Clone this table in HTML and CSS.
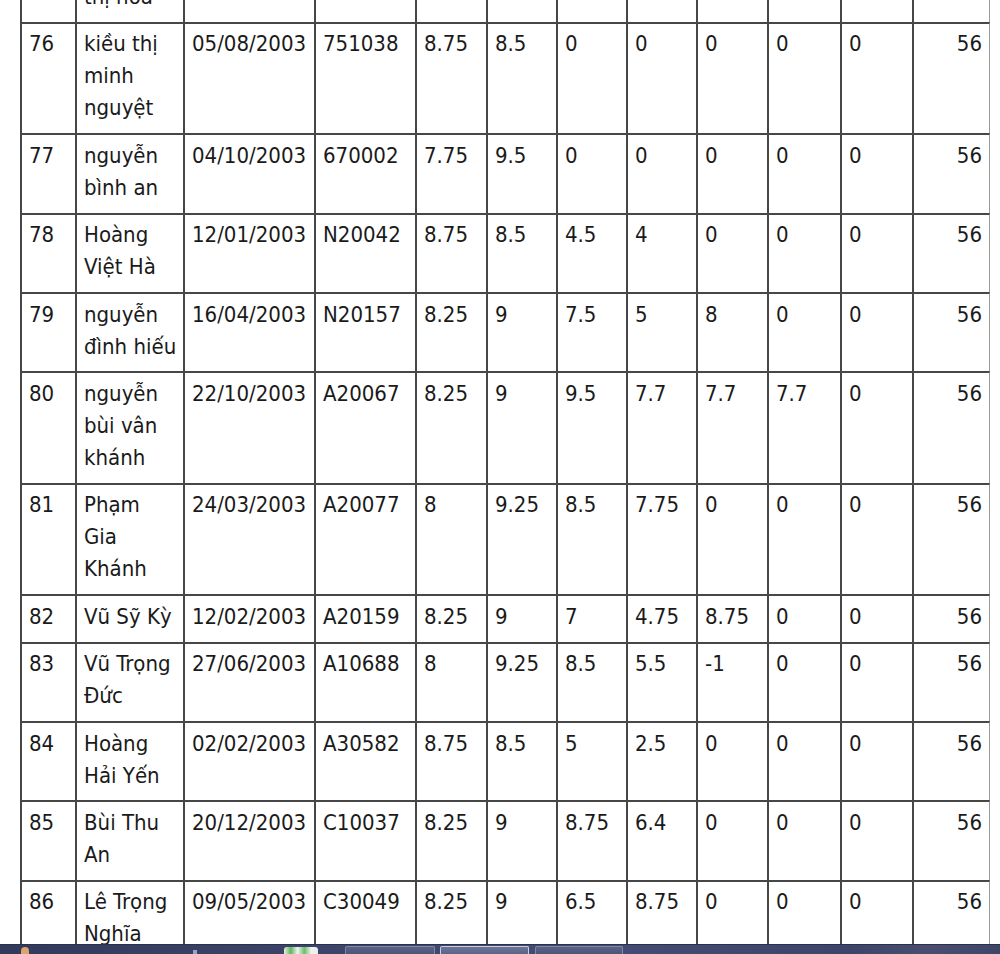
FILE: index.html
```html
<!DOCTYPE html>
<html lang="vi">
<head>
<meta charset="utf-8">
<title>Danh sách</title>
<link rel="stylesheet" href="styles.css">
</head>
<body>
<div class="page">
<table class="scores">
<tbody>
<tr><td class="c1">75</td><td class="c2 name">nguyễn thị hoa</td><td class="c3"></td><td class="c4"></td><td class="c5"></td><td class="c6"></td><td class="c7"></td><td class="c8"></td><td class="c9"></td><td class="c10"></td><td class="c11"></td><td class="c12 num"></td></tr>
<tr><td>76</td><td class="name">kiều thị minh nguyệt</td><td>05/08/2003</td><td>751038</td><td>8.75</td><td>8.5</td><td>0</td><td>0</td><td>0</td><td>0</td><td>0</td><td class="num">56</td></tr>
<tr><td>77</td><td class="name">nguyễn bình an</td><td>04/10/2003</td><td>670002</td><td>7.75</td><td>9.5</td><td>0</td><td>0</td><td>0</td><td>0</td><td>0</td><td class="num">56</td></tr>
<tr><td>78</td><td class="name">Hoàng Việt Hà</td><td>12/01/2003</td><td>N20042</td><td>8.75</td><td>8.5</td><td>4.5</td><td>4</td><td>0</td><td>0</td><td>0</td><td class="num">56</td></tr>
<tr><td>79</td><td class="name">nguyễn đình hiếu</td><td>16/04/2003</td><td>N20157</td><td>8.25</td><td>9</td><td>7.5</td><td>5</td><td>8</td><td>0</td><td>0</td><td class="num">56</td></tr>
<tr><td>80</td><td class="name">nguyễn bùi vân khánh</td><td>22/10/2003</td><td>A20067</td><td>8.25</td><td>9</td><td>9.5</td><td>7.7</td><td>7.7</td><td>7.7</td><td>0</td><td class="num">56</td></tr>
<tr><td>81</td><td class="name">Phạm Gia Khánh</td><td>24/03/2003</td><td>A20077</td><td>8</td><td>9.25</td><td>8.5</td><td>7.75</td><td>0</td><td>0</td><td>0</td><td class="num">56</td></tr>
<tr><td>82</td><td class="name">Vũ Sỹ Kỳ</td><td>12/02/2003</td><td>A20159</td><td>8.25</td><td>9</td><td>7</td><td>4.75</td><td>8.75</td><td>0</td><td>0</td><td class="num">56</td></tr>
<tr><td>83</td><td class="name">Vũ Trọng Đức</td><td>27/06/2003</td><td>A10688</td><td>8</td><td>9.25</td><td>8.5</td><td>5.5</td><td>-1</td><td>0</td><td>0</td><td class="num">56</td></tr>
<tr><td>84</td><td class="name">Hoàng Hải Yến</td><td>02/02/2003</td><td>A30582</td><td>8.75</td><td>8.5</td><td>5</td><td>2.5</td><td>0</td><td>0</td><td>0</td><td class="num">56</td></tr>
<tr><td>85</td><td class="name">Bùi Thu An</td><td>20/12/2003</td><td>C10037</td><td>8.25</td><td>9</td><td>8.75</td><td>6.4</td><td>0</td><td>0</td><td>0</td><td class="num">56</td></tr>
<tr><td>86</td><td class="name">Lê Trọng Nghĩa</td><td>09/05/2003</td><td>C30049</td><td>8.25</td><td>9</td><td>6.5</td><td>8.75</td><td>0</td><td>0</td><td>0</td><td class="num">56</td></tr>
</tbody>
</table>
</div>
<div class="taskbar">
  <span class="tb-icon tb-start"></span>
  <span class="tb-icon tb-small"></span>
  <span class="tb-icon tb-green"></span>
  <span class="tb-btn tb-b1"></span>
  <span class="tb-btn tb-b2 active"></span>
  <span class="tb-btn tb-b3"></span>
</div>
</body>
</html>
```
FILE: styles.css
```css
html, body {
  margin: 0;
  padding: 0;
  background: #ffffff;
  overflow: hidden;
}

body {
  font-family: "DejaVu Sans Condensed", "DejaVu Sans", sans-serif;
  font-stretch: condensed;
  font-size: 22px;
  color: #1a1a1a;
}

.page {
  padding-left: 20px;
  margin-top: -57.5px;
}

.scores {
  border-collapse: separate;
  border-spacing: 0;
  table-layout: fixed;
  width: 970px;
}

.scores td {
  box-sizing: border-box;
  border-left: 2px solid #474747;
  border-top: 2px solid #474747;
  padding: 4.5px 4px 8.9px 7px;
  line-height: 32px;
  vertical-align: top;
  text-align: left;
  white-space: normal;
}

.scores td.name {
  padding-right: 5.5px;
}

.scores td:last-child {
  border-right: 1px solid #9a9a9a;
  padding-right: 7px;
}

.scores td.num {
  text-align: right;
}

.c1 { width: 55px; }
.c2 { width: 108px; }
.c3 { width: 131px; }
.c4 { width: 101px; }
.c5 { width: 71px; }
.c6 { width: 70px; }
.c7 { width: 70px; }
.c8 { width: 70px; }
.c9 { width: 71px; }
.c10 { width: 73px; }
.c11 { width: 72px; }
.c12 { width: 78px; }

.taskbar {
  position: fixed;
  left: 0;
  right: 0;
  bottom: 0;
  height: 9px;
  background: linear-gradient(90deg, #323a5a 0%, #3b4468 30%, #434c72 60%, #3c4569 85%, #4a4e6e 93%, #3e4668 100%);
  border-top: 1px solid #2a3050;
}

.tb-icon, .tb-btn {
  position: absolute;
  top: 2px;
}

.tb-start {
  left: 21px;
  width: 8px;
  height: 8px;
  border-radius: 4px 4px 0 0;
  background: #d9a56a;
}

.tb-small {
  left: 193px;
  width: 4px;
  height: 5px;
  top: 5px;
  background: #9aa2bd;
}

.tb-green {
  left: 284px;
  width: 34px;
  height: 8px;
  border-radius: 3px 3px 0 0;
  background: linear-gradient(90deg, #e8efe8 0%, #5cb85c 20%, #f2f2f2 40%, #69c069 60%, #f2f2f2 80%, #e8efe8 100%);
}

.tb-btn {
  top: 1px;
  height: 10px;
  border: 1px solid #7f88a3;
  border-bottom: none;
  border-radius: 2px 2px 0 0;
  background: linear-gradient(180deg, #5a6286 0%, #485074 100%);
  box-sizing: border-box;
}

.tb-b1 { left: 345px; width: 90px; }
.tb-b2 { left: 440px; width: 89px; }
.tb-b3 { left: 535px; width: 88px; }

.tb-btn.active {
  border-color: #c9cedb;
  background: linear-gradient(180deg, #6d7597 0%, #555d82 100%);
}
```
